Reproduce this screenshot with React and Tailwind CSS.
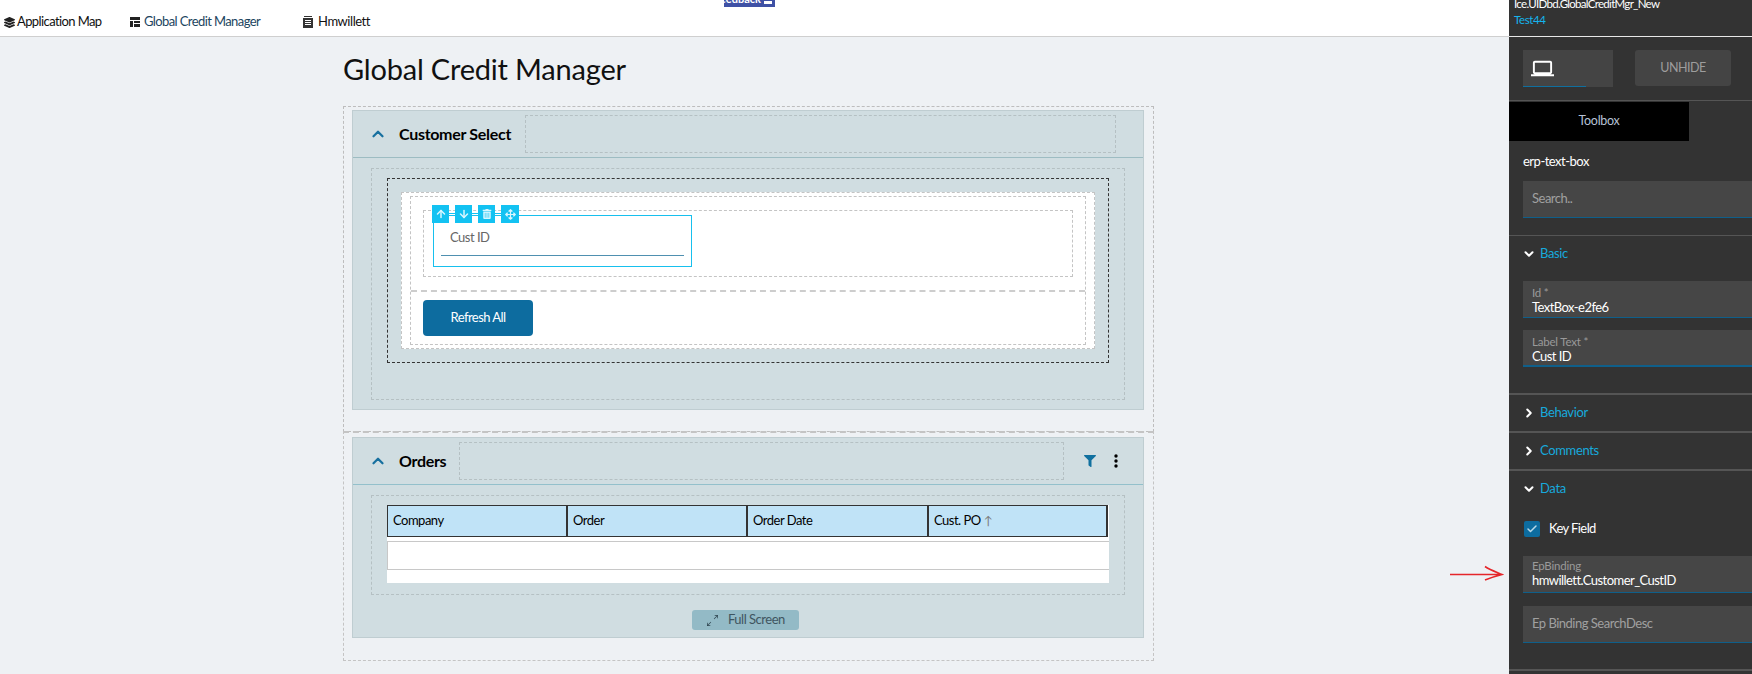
import React from "react";
import { ChevronUp, ChevronDown, ChevronRight, Check, ArrowUp, ArrowDown } from "lucide-react";
import { FaLayerGroup, FaTrashAlt, FaArrowsAlt, FaFilter } from "react-icons/fa";
import { BsArrowsAngleExpand } from "react-icons/bs";
import { MdLaptop } from "react-icons/md";

function ToolButton({ className, children }) {
  return <div className={"absolute top-[-11px] h-[18px] bg-[#13c2f2] flex items-center justify-center text-[#d8f6ff] " + className}>{children}</div>;
}

function Field({ label, value, className }) {
  return (
    <div className={"w-[300px] h-[37px] ml-[14px] bg-[#464646] border-b border-[#0f5f8a] pl-[9px] flex flex-col " + className}>
      <div className="text-[11.5px] leading-[12px] tracking-[-0.2px] text-[#9a9a9a]">{label}</div>
      <div className="text-[13px] leading-[16px] tracking-[-0.55px] text-white">{value}</div>
    </div>
  );
}

function Section({ title, open }) {
  const Icon = open ? ChevronDown : ChevronRight;
  return (
    <div className="h-[36px] flex items-center pl-[13px]">
      <Icon size={14} strokeWidth={3.5} className="text-white" />
      <span className="ml-[4px] text-[13px] tracking-[-0.35px] text-[#17a9dc]">{title}</span>
    </div>
  );
}

export default function App() {
  return (
    <div className="relative flex w-[1752px] h-[674px] overflow-hidden font-['Lato',sans-serif] tracking-[-0.5px] bg-[#eef1f4]">
      <div className="w-[1509px] shrink-0 flex flex-col">
        <div className="relative h-[37px] bg-white border-b border-[#cfcfcf] flex items-center text-[13px] text-[#111] pt-[8px] shrink-0">
          <div className="absolute left-[724px] top-0 w-[51px] h-[7px] bg-[#3f51a5] overflow-hidden flex items-end justify-end pb-[3px] pr-[3px] gap-[3px] text-[11px] leading-[11px] font-bold text-white tracking-normal">
            <span>Feedback</span>
            <span className="w-[8px] h-[3px] bg-white shrink-0" />
          </div>
          <FaLayerGroup size={11} className="ml-[4px] text-[#222]" />
          <span className="ml-[2px] w-[113px] tracking-[-0.6px]">Application Map</span>
          <svg width="10" height="10" viewBox="0 0 10 10" className="text-[#222]">
            <path fill="currentColor" d="M0 0h10v3H0zM0 4h3v6H0zM4 4h6v2H4zM4 7h6v3H4z" />
          </svg>
          <span className="ml-[4px] w-[159px] tracking-[-0.6px] text-[#1c4560]">Global Credit Manager</span>
          <svg width="10" height="12" viewBox="0 0 10 12" className="text-[#333]">
            <path fill="currentColor" d="M1 0h8v1H1zM0 2h10v10H0z" />
            <path fill="#fff" d="M2 4h6v1H2zM2 6h6v1H2zM2 8h6v1H2z" />
          </svg>
          <span className="ml-[5px] tracking-[-0.45px]">Hmwillett</span>
        </div>

        <div className="pl-[343px] w-[1154px] box-content">
          <div className="h-[69px] pt-[13px] text-[29px] leading-[38px] tracking-[-0.2px] text-[#111]">Global Credit Manager</div>

          <div className="w-[811px] h-[326px] border border-dashed border-[#bdbdbd] pl-[8px] pt-[3px]">
            <div className="w-[792px] h-[300px] bg-[#d0dde1] border border-[#bfcdd1]">
              <div className="h-[47px] border-b border-[#9dbcc2] flex items-center">
                <ChevronUp size={18} strokeWidth={3} className="ml-[16px] text-[#17709f]" />
                <span className="ml-[12px] w-[126px] text-[16px] tracking-[-0.3px] font-bold text-black">Customer Select</span>
                <div className="w-[591px] h-[38px] border border-dashed border-[#b5c0c3]" />
              </div>
              <div className="pl-[18px] pt-[10px]">
                <div className="w-[754px] h-[232px] border border-dashed border-[#b5c0c3] pl-[15px] pt-[9px]">
                  <div className="w-[722px] h-[185px] border border-dashed border-[#333] pl-[13px] pt-[13px]">
                    <div className="w-[694px] h-[157px] bg-white border border-dashed border-[#c4c4c4] pl-[8px] pt-[3px]">
                      <div className="w-[676px] h-[149px] border border-dashed border-[#c4c4c4] flex flex-col">
                        <div className="h-[93px] shrink-0 pl-[12px] pt-[13px]">
                          <div className="w-[650px] h-[67px] border border-dashed border-[#c4c4c4] pl-[9px] pt-[4px]">
                            <div className="relative w-[259px] h-[52px] border border-[#17c0ee] bg-white px-[7px]">
                              <div className="absolute left-[-2px] w-[85px] top-[-3px] h-px bg-[#13c2f2]" />
                              <ToolButton className="left-[-2px] w-[17px]"><ArrowUp size={12} strokeWidth={3} /></ToolButton>
                              <ToolButton className="left-[21px] w-[17px]"><ArrowDown size={12} strokeWidth={3} /></ToolButton>
                              <ToolButton className="left-[44px] w-[17px]"><FaTrashAlt size={10} /></ToolButton>
                              <ToolButton className="left-[67px] w-[18px]"><FaArrowsAlt size={11} /></ToolButton>
                              <div className="h-[40px] border-b border-[#4f90b0] pl-[9px] pt-[10px] text-[13px] leading-[22px] text-[#666]">Cust ID</div>
                            </div>
                          </div>
                        </div>
                        <div className="flex-1 border-t-2 border-dashed border-[#cdcdcd] pl-[12px] pt-[8px]">
                          <div className="w-[110px] h-[36px] rounded-[4px] bg-[#0d6c9f] flex items-center justify-center text-[13px] tracking-[-0.55px] text-white">Refresh All</div>
                        </div>
                      </div>
                    </div>
                  </div>
                </div>
              </div>
            </div>
          </div>

          <div className="w-[811px] h-[230px] -mt-px border-t-2 border border-dashed border-[#c4c4c4] pl-[8px] pt-[4px]">
            <div className="w-[792px] h-[201px] bg-[#d0dde1] border border-[#bfcdd1]">
              <div className="h-[47px] border-b border-[#93c0cb] flex items-center">
                <ChevronUp size={18} strokeWidth={3} className="ml-[16px] text-[#17709f]" />
                <span className="ml-[12px] w-[60px] text-[16px] tracking-[-0.3px] font-bold text-black">Orders</span>
                <div className="w-[605px] h-[38px] border border-dashed border-[#b5c0c3]" />
                <FaFilter size={12} className="ml-[20px] text-[#10709f]" />
                <svg width="4" height="14" viewBox="0 0 4 14" className="ml-[18px] text-black">
                  <circle cx="2" cy="2" r="1.7" fill="currentColor" />
                  <circle cx="2" cy="7" r="1.7" fill="currentColor" />
                  <circle cx="2" cy="12" r="1.7" fill="currentColor" />
                </svg>
              </div>
              <div className="pl-[18px] pt-[10px]">
                <div className="w-[754px] h-[100px] border border-dashed border-[#b5c0c3] pl-[15px] pt-[9px]">
                  <div className="w-[722px] h-[78px] bg-white">
                    <div className="w-[721px] h-[32px] bg-[#c0e3f7] border-y border-l border-[#333] flex text-[13px] text-black">
                      <div className="w-[180px] border-r-2 border-[#333] pl-[5px] flex items-center">Company</div>
                      <div className="w-[180px] border-r-2 border-[#333] pl-[5px] flex items-center">Order</div>
                      <div className="w-[181px] border-r-2 border-[#333] pl-[5px] flex items-center">Order Date</div>
                      <div className="w-[179px] border-r-2 border-[#333] pl-[5px] flex items-center">
                        Cust. PO<span className="ml-[3px] text-[#7a7a7a] text-[12px]">↑</span>
                      </div>
                    </div>
                    <div className="mt-[4px] h-[29px] border-y border-l border-[#c8c8c8]" />
                  </div>
                </div>
                <div className="ml-[321px] mt-[15px] w-[107px] h-[20px] rounded-[3px] bg-[#93bac6] flex items-center text-[13px] text-[#3f5560]">
                  <BsArrowsAngleExpand size={11} className="ml-[15px] text-[#2f4550]" />
                  <span className="ml-[10px]">Full Screen</span>
                </div>
              </div>
            </div>
          </div>
        </div>
      </div>

      <div className="w-[243px] shrink-0 h-[674px] bg-[#333333] overflow-hidden flex flex-col text-white">
        <div className="h-[37px] shrink-0 border-b border-[#e8e8e8] relative">
          <div className="absolute left-[5px] top-[-3px] text-[11.5px] leading-[14px] tracking-[-0.7px] whitespace-nowrap">Ice.UIDbd.GlobalCreditMgr_New</div>
          <div className="absolute left-[5px] top-[13px] text-[11.5px] leading-[14px] tracking-[-0.4px] text-[#14b5ee]">Test44</div>
        </div>
        <div className="h-[64px] shrink-0 border-b border-[#555] pl-[14px] pt-[13px] flex items-start">
          <div className="relative w-[90px] h-[37px] bg-[#444] flex items-center pl-[8px]">
            <MdLaptop size={23} className="text-white" />
            <div className="absolute left-0 bottom-0 w-[63px] h-px bg-[#0f6f9f]" />
          </div>
          <div className="ml-[22px] w-[96px] h-[36px] rounded-[3px] bg-[#444] flex items-center justify-center text-[12.5px] text-[#9d9d9d]">UNHIDE</div>
        </div>
        <div className="mt-[1px] w-[180px] h-[39px] shrink-0 bg-black flex items-center justify-center pb-[1px] text-[12.5px] tracking-[-0.3px] text-[#b6c2d6]">Toolbox</div>
        <div className="h-[40px] shrink-0 pl-[14px] pt-[2px] flex items-center text-[13px] text-white">erp-text-box</div>
        <div className="ml-[14px] w-[300px] h-[37px] shrink-0 bg-[#464646] border-b border-[#0f5f8a] pl-[9px] flex items-center text-[13px] text-[#a0a0a0]">Search..</div>
        <div className="mt-[17px] h-px shrink-0 bg-[#555]" />
        <Section title="Basic" open />
        <Field className="mt-[9px] shrink-0 pt-[6px]" label="Id *" value="TextBox-e2fe6" />
        <Field className="mt-[12px] shrink-0 pt-[6px] border-b-2" label="Label Text *" value="Cust ID" />
        <div className="mt-[26px] h-[2px] shrink-0 bg-[#555]" />
        <Section title="Behavior" />
        <div className="h-[2px] shrink-0 bg-[#555]" />
        <Section title="Comments" />
        <div className="h-[2px] shrink-0 bg-[#555]" />
        <Section title="Data" open />
        <div className="mt-[14px] h-[16px] shrink-0 flex items-center pl-[15px]">
          <div className="w-[16px] h-[16px] rounded-[2px] bg-[#0d6c9f] flex items-center justify-center">
            <Check size={12} strokeWidth={3} className="text-[#b9d9e8]" />
          </div>
          <span className="ml-[9px] text-[13px] tracking-[-0.6px]">Key Field</span>
        </div>
        <Field className="mt-[19px] shrink-0 pt-[4px]" label="EpBinding" value="hmwillett.Customer_CustID" />
        <div className="mt-[13px] ml-[14px] w-[300px] h-[37px] shrink-0 bg-[#464646] border-b border-[#0f5f8a] pl-[9px] flex items-center text-[13px] text-[#a0a0a0]">Ep Binding SearchDesc</div>
        <div className="mt-[26px] h-[2px] shrink-0 bg-[#555]" />
      </div>

      <svg className="absolute left-[1448px] top-[564px]" width="56" height="20" viewBox="0 0 56 20" fill="none">
        <path d="M2 10.5 H54 M37 2.5 C42 6 48 8 54 10.5 C48 12 42 14 37 16" stroke="#e5262a" strokeWidth="1.6" />
      </svg>
    </div>
  );
}
